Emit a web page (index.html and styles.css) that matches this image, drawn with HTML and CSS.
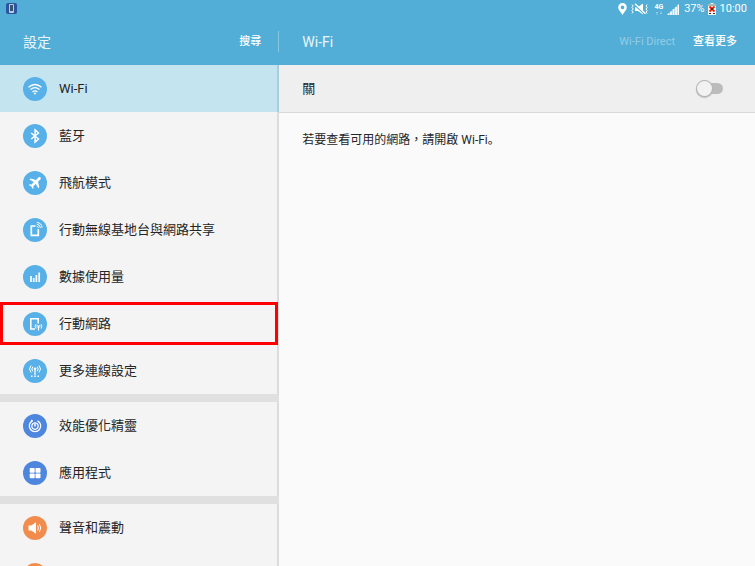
FILE: index.html
```html
<!DOCTYPE html>
<html lang="zh-Hant">
<head>
<meta charset="utf-8">
<meta name="viewport" content="width=device-width, initial-scale=1">
<title>設定</title>
<link rel="stylesheet" href="styles.css">
</head>
<body>
<div class="status">
  <svg class="app" width="11" height="11" viewBox="0 0 11 11"><rect width="11" height="11" rx="2" fill="#2c559f"/><rect x="3" y="1" width="5" height="9" rx="1" fill="#b9cfe0"/><rect x="4" y="2" width="3" height="6" fill="#37536e"/></svg>
  <div class="tray">
    <svg width="9" height="12" viewBox="0 0 9 12"><path fill="#fff" fill-rule="evenodd" d="M4.5 0A4.3 4.3 0 0 0 .2 4.3C.2 7.200 3 9 4.500 12 6 9 8.800 7.200 8.800 4.300A4.300 4.300 0 0 0 4.500 0zM4.500 2.600a1.800 1.800 0 1 1 0 3.600 1.800 1.800 0 0 1 0-3.600z"/></svg>
    <svg class="mute" width="18" height="12" viewBox="0 0 18 12"><path fill="#fff" d="M4 4h3l5-3.500v11L7 8H4z"/><path d="M3 1l11 10" stroke="#52aed6" stroke-width="2"/><path d="M4 .8l10.500 10" stroke="#fff" stroke-width="1.400"/><path d="M1 1.500l1.200 1.500L1 4.500 2.200 6 1 7.500 2.200 9 1 10.500M16.200 1.500L15 3l1.200 1.500L15 6l1.200 1.500L15 9l1.200 1.500" fill="none" stroke="#fff"/></svg>
    <span class="net"><b>4G</b><svg width="8" height="4" viewBox="0 0 8 4"><path d="M2 4V1M1 2l1-1 1 1M6 0v3M5 2l1 1 1-1" fill="none" stroke="#a5d5eb" stroke-width=".7"/></svg></span>
    <svg class="signal" width="12" height="11" viewBox="0 0 12 11"><path fill="#9ed2e8" d="M0 11L12 0v11z"/><path d="M1.500 11V9.600M4 11V7.500M6.500 11V5M9 11V3M11.500 11V.5" stroke="#fff" stroke-width="1.500"/></svg>
    <span class="percent">37%</span>
    <svg class="battery" width="8" height="12" viewBox="0 0 8 12"><path fill="#f4f4ee" d="M2.500 0h3v1H8v11H0V1h2.500z"/><rect y="1" width="8" height="2" fill="#a9bbb4"/><path d="M1.500 3.500l5 5M6.500 3.500l-5 5" stroke="#ee2912" stroke-width="2"/><path fill="#573022" d="M3 5h2v2H3zM1 10h2v1H1zM5 10h2v1H5z"/></svg>
    <span>10:00</span>
  </div>
</div>
<header class="header">
  <div class="header-left"><h1>設定</h1><button class="action" type="button">搜尋</button></div>
  <div class="header-right"><h2>Wi-Fi</h2><button class="action direct" type="button" disabled>Wi-Fi Direct</button><button class="action" type="button">查看更多</button></div>
</header>
<div class="content">
  <nav class="sidebar">
    <div class="group">
      <a class="item selected" href="#wifi"><svg class="icon blue" viewBox="0 0 24 24"><g fill="none" stroke="#fff" stroke-width="1.300"><path d="M5.500 10.200q6.500-5.400 13 0M7.500 12.600q4.500-3.800 9 0M9.500 15q2.500-2.100 5 0"/></g><circle cx="12" cy="16.600" r="1" fill="#fff"/></svg>Wi-Fi</a>
      <a class="item" href="#bluetooth"><svg class="icon blue" viewBox="0 0 24 24"><path d="M8.200 9l7.300 6-3.400 3V6l3.400 3-7.300 6" fill="none" stroke="#fff" stroke-width="1.500"/></svg>藍牙</a>
      <a class="item" href="#flight"><svg class="icon blue" viewBox="0 0 24 24"><path fill="#fff" d="M17.500 6.500c-.8-.8-1.800-.3-2.500.4l-2 2L7.500 7.500l-1 1 4.300 2.600-2.300 2.500-2-.3-.7.700 2.500 1.400 1.600 2.600.7-.7-.3-2 2.400-2.300 2.700 4.300 1-1-1.400-5.500 2-2c.7-.7 1.300-1.500.5-2.300z"/></svg>飛航模式</a>
      <a class="item" href="#hotspot"><svg class="icon blue" viewBox="0 0 24 24"><g fill="none" stroke="#fff"><path d="M12.500 8H8.300v9.300h7V11" stroke-width="1.700"/><path d="M13.800 8.300q1.500.2 1.600 1.600M13.800 6.300q3.400.2 3.600 3.600M13.800 4.500q5 .3 5.200 5.200"/></g></svg>行動無線基地台與網路共享</a>
      <a class="item" href="#data"><svg class="icon blue" viewBox="0 0 24 24"><path d="M8 17v-6M10.700 17v-4M13.400 17v-7M16.200 17V7.500" stroke="#fff" stroke-width="1.700"/></svg>數據使用量</a>
      <a class="item marked" href="#mobile"><svg class="icon blue" viewBox="0 0 24 24"><g fill="none" stroke="#fff"><path d="M12 17H7.800V6.800h7.400v4.700" stroke-width="1.600"/><path d="M13 12q-1.800 2.300 0 4.600M18 12q1.800 2.300 0 4.600M14.400 13q-.9 1.300 0 2.600M16.600 13q.9 1.300 0 2.600" stroke-width=".9"/><path d="M15.500 13.500v5" stroke-width="1.200"/></g></svg>行動網路</a>
      <a class="item" href="#connections"><svg class="icon blue" viewBox="0 0 24 24"><g fill="none" stroke="#fff"><path d="M8 6.500q-3 3.300 0 7M16 6.500q3 3.300 0 7M9.800 7.700q-2 2.300 0 4.700M14.200 7.700q2 2.300 0 4.700"/><path d="M12 10.500V16" stroke-width="1.200"/></g><circle cx="12" cy="9.800" r="1.300" fill="#fff"/><path fill="#fff" d="M8 16.500h1.500V18H8zM11.200 16.500h1.600V18h-1.600zM14.500 16.500H16V18h-1.500z"/></svg>更多連線設定</a>
    </div>
    <div class="group">
      <a class="item" href="#optimize"><svg class="icon indigo" viewBox="0 0 24 24"><g fill="none" stroke="#fff" stroke-width="1.300"><path d="M14.500 6.800a5.700 5.700 0 1 1-5 0"/><path d="M9.700 6.700l-1.800-.2M13.300 9.200a3.200 3.200 0 1 1-2.600 0"/></g><path d="M12 8v4.500" stroke="#fff" stroke-width="1.500"/></svg>效能優化精靈</a>
      <a class="item" href="#apps"><svg class="icon indigo" viewBox="0 0 24 24"><g fill="#fff"><rect x="6.700" y="7" width="5" height="4.700" rx=".8"/><rect x="12.500" y="7" width="5" height="4.700" rx=".8"/><rect x="6.700" y="12.500" width="5" height="4.700" rx=".8"/><rect x="12.500" y="12.500" width="5" height="4.700" rx=".8"/></g></svg>應用程式</a>
    </div>
    <div class="group">
      <a class="item" href="#sound"><svg class="icon orange" viewBox="0 0 24 24"><path fill="#fff" d="M5.500 9.500h2.800l4.700-3.300v11.600l-4.700-3.300H5.500z"/><path d="M14.500 9.500q1.800 2.500 0 5M16.300 8q2.800 4 0 8" fill="none" stroke="#fff"/></svg>聲音和震動</a>
      <a class="item" href="#notifications" aria-label="通知"><svg class="icon orange" viewBox="0 0 24 24"><rect x="7" y="8" width="10" height="8" rx="1" fill="#fff"/></svg></a>
    </div>
  </nav>
  <main class="detail">
    <div class="switch-row"><label for="wifi-switch">關</label><input id="wifi-switch" class="switch" type="checkbox" role="switch"></div>
    <p class="hint">若要查看可用的網路，請開啟 Wi-Fi<span class="stop" lang="zh-Hans">。</span></p>
  </main>
</div>
</body>
</html>
```
FILE: styles.css
```css
* { box-sizing: border-box; }

body {
  margin: 0;
  height: 100vh;
  display: flex;
  flex-direction: column;
  overflow: hidden;
  background: #fafafa;
  color: #252525;
  font: 13px/20px Roboto, "Noto Sans CJK TC", sans-serif;
}

svg { display: block; flex: none; }

.status {
  display: flex;
  justify-content: space-between;
  height: 18px;
  padding: 0 8px 0 6px;
  background: #52aed6;
  color: #fff;
  font-size: 11px;
  line-height: 18px;
}

.app { margin-top: 3px; }
.tray { display: flex; align-items: center; }
.mute { margin-left: 4px; }
.net {
  display: flex;
  flex-direction: column;
  align-items: center;
  margin-left: 5px;
  font-size: 7px;
  line-height: 7px;
}
.signal { margin-left: 4px; }
.percent { margin-left: 5px; }
.battery { margin: 0 4px 0 3px; }

.header {
  display: flex;
  height: 47px;
  flex: none;
  background: #52aed6;
  color: #e9f6fb;
}

.header-left,
.header-right {
  display: flex;
  align-items: center;
  padding: 0 18px 0 23px;
}
.header-left {
  width: 37%;
  position: relative;
  justify-content: space-between;
}
.header-left::after {
  content: "";
  position: absolute;
  right: 0;
  top: 13px;
  width: 1px;
  height: 21px;
  background: #86c6e2;
}
.header-right { flex: 1; gap: 18px; }

h1, h2 { margin: 0; font-size: 14px; font-weight: 400; }
h2 { margin-right: auto; }

.action {
  padding: 0;
  border: 0;
  background: none;
  color: #fff;
  font: 500 11px/20px Roboto, "Noto Sans CJK TC", sans-serif;
}
.direct { color: #94cce5; font-weight: 400; }

.content { display: flex; flex: 1; min-height: 0; }

.sidebar {
  width: 37%;
  overflow: hidden;
  background: #f4f4f4;
  box-shadow: inset -2px 0 #dcdcdc;
}

.group + .group { border-top: 8px solid #e0e0e0; }

.item {
  position: relative;
  display: flex;
  align-items: center;
  gap: 12px;
  height: 47px;
  padding-left: 23px;
  color: inherit;
  text-decoration: none;
}
.selected { background: #c4e4f0; box-shadow: inset -2px 0 #a9cedb; }
.marked::after {
  content: "";
  position: absolute;
  inset: 2px 1px 2px 0;
  border: 3px solid #fe0000;
}

.icon { width: 24px; height: 24px; border-radius: 50%; }
.blue { background: #57b0e7; }
.indigo { background: #4d86dc; }
.orange { background: #f28c4d; }

.detail { flex: 1; min-width: 0; }

.switch-row {
  display: flex;
  align-items: center;
  justify-content: space-between;
  height: 48px;
  padding: 0 32px 0 23px;
  border-bottom: 1px solid #d9d9d9;
  background: #efefef;
}

.switch {
  appearance: none;
  position: relative;
  width: 27px;
  height: 11px;
  margin: 0;
  border-radius: 6px;
  background: linear-gradient(to right, transparent 8px, #bcbcbc 8px);
}
.switch::before {
  content: "";
  position: absolute;
  left: 1px;
  top: -2px;
  width: 15px;
  height: 15px;
  border-radius: 50%;
  background: #f2f2f2;
  box-shadow: 0 0 0 1px #b5b5b5, 0 1px 1px 1px #bbb;
}
.switch:checked::before { left: 12px; }

.hint { margin: 16px 23px; font-size: 12px; }
.stop { font-family: "Noto Sans CJK SC", sans-serif; }
```
